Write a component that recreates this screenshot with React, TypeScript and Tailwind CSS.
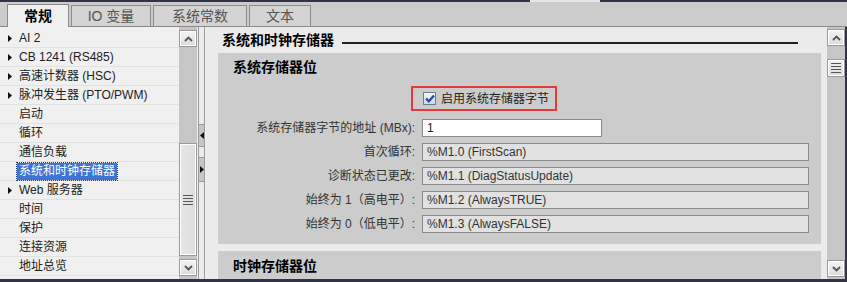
import React from 'react';

const font = "font-['Liberation_Sans','Noto_Sans_CJK_SC',sans-serif]";

const navItems: { label: string; arrow?: boolean; selected?: boolean }[] = [
  { label: 'AI 2', arrow: true },
  { label: 'CB 1241 (RS485)', arrow: true },
  { label: '高速计数器 (HSC)', arrow: true },
  { label: '脉冲发生器 (PTO/PWM)', arrow: true },
  { label: '启动' },
  { label: '循环' },
  { label: '通信负载' },
  { label: '系统和时钟存储器', selected: true },
  { label: 'Web 服务器', arrow: true },
  { label: '时间' },
  { label: '保护' },
  { label: '连接资源' },
  { label: '地址总览' },
];

const fields = [
  { label: '首次循环:', value: '%M1.0 (FirstScan)' },
  { label: '诊断状态已更改:', value: '%M1.1 (DiagStatusUpdate)' },
  { label: '始终为 1（高电平）:', value: '%M1.2 (AlwaysTRUE)' },
  { label: '始终为 0（低电平）:', value: '%M1.3 (AlwaysFALSE)' },
];

function Chevron({ up }: { up?: boolean }) {
  return (
    <svg width="9" height="6" viewBox="0 0 9 6">
      <path
        d={up ? 'M1 5 L4.5 1.5 L8 5' : 'M1 1 L4.5 4.5 L8 1'}
        stroke="#555"
        strokeWidth="1.8"
        fill="none"
      />
    </svg>
  );
}

function Grip() {
  return (
    <div className="flex flex-col gap-[2px]">
      <div className="w-[10px] h-px bg-[#555]" />
      <div className="w-[10px] h-px bg-[#555]" />
      <div className="w-[10px] h-px bg-[#555]" />
      <div className="w-[10px] h-px bg-[#555]" />
    </div>
  );
}

function ScrollButton({ up }: { up?: boolean }) {
  return (
    <div className="h-[17px] flex items-center justify-center bg-gradient-to-b from-[#f4f4f4] to-[#dcdcdc] border border-[#9a9a9a] shadow-[inset_0_0_0_1px_#fff]">
      <Chevron up={up} />
    </div>
  );
}

function Triangle({ dir }: { dir: 'left' | 'right' }) {
  return (
    <svg width="4" height="7" viewBox="0 0 4 7">
      <path d={dir === 'right' ? 'M0 0 L4 3.5 L0 7 Z' : 'M4 0 L0 3.5 L4 7 Z'} fill="#111" />
    </svg>
  );
}

export default function App() {
  return (
    <div className={`w-[847px] h-[282px] flex flex-col bg-[#cccccc] text-[12px] text-[#222] overflow-hidden ${font}`}>
      {/* top strip */}
      <div className="h-[2px] flex shrink-0">
        <div className="w-[530px] bg-[#2f3447]" />
        <div className="w-[70px] bg-[#e6e6e6]" />
        <div className="flex-1 bg-[#2f3447]" />
      </div>

      {/* tabs */}
      <div className="h-[25px] shrink-0 flex items-end pl-[7px] gap-[2px] border-b border-[#8a8a8a] bg-[#cccccc]">
        <div className="w-[62px] h-[23px] -mb-px bg-[#f0f0f0] border border-b-0 border-[#8a8a8a] flex items-center justify-center text-[14px] font-bold text-black">
          常规
        </div>
        <div className="w-[80px] h-[21px] bg-[#d4d4d4] border border-b-0 border-[#8a8a8a] flex items-center justify-center text-[14px] text-[#555]">
          IO 变量
        </div>
        <div className="w-[94px] h-[21px] bg-[#d4d4d4] border border-b-0 border-[#8a8a8a] flex items-center justify-center text-[14px] text-[#555]">
          系统常数
        </div>
        <div className="w-[62px] h-[21px] bg-[#d4d4d4] border border-b-0 border-[#8a8a8a] flex items-center justify-center text-[14px] text-[#555]">
          文本
        </div>
      </div>

      {/* main */}
      <div className="flex-1 flex min-h-0">
        {/* nav list */}
        <div className="w-[179px] bg-[#f0f0f0] pt-[2px] flex flex-col">
          {navItems.map((item) => (
            <div key={item.label} className="h-[19px] shrink-0 flex items-center border-b border-[#e2e2e2]">
              <div className="w-[17px] flex justify-center pl-[2px]">
                {item.arrow && <Triangle dir="right" />}
              </div>
              {item.selected ? (
                <span className="px-[2px] h-[17px] flex items-center bg-[#3d74d6] text-white outline outline-1 outline-dotted outline-[#1d3a80]">
                  {item.label}
                </span>
              ) : (
                <span className="px-[2px]">{item.label}</span>
              )}
            </div>
          ))}
        </div>

        {/* nav scrollbar */}
        <div className="w-[18px] flex flex-col bg-[#c6c6c6] pt-[3px] pb-[3px]">
          <ScrollButton up />
          <div className="h-[95px]" />
          <div className="flex-1 mt-px mb-[3px] bg-gradient-to-r from-[#e6e6e6] to-[#dedede] border border-[#9a9a9a] shadow-[inset_0_0_0_1px_#fff] flex items-center justify-center">
            <Grip />
          </div>
          <ScrollButton />
        </div>

        {/* splitter */}
        <div className="w-[9px] bg-[#f0f0f0] flex pl-px">
          <div className="w-[7px] border-x border-[#9a9a9a] bg-[#ececec] flex flex-col pt-[97px]">
            <div className="h-[23px] bg-[#c6c6c6] border-y border-[#9a9a9a] flex items-center justify-center">
              <Triangle dir="left" />
            </div>
            <div className="h-[10px]" />
            <div className="h-[25px] bg-[#c6c6c6] border-y border-[#9a9a9a] flex items-center justify-center">
              <Triangle dir="right" />
            </div>
          </div>
        </div>

        {/* content */}
        <div className="w-[621px] bg-[#ebebeb] flex flex-col pl-[12px] pr-[6px] overflow-hidden">
          <div className="h-[26px] shrink-0 flex items-center pl-[4px] gap-[8px]">
            <span className="text-[14px] font-bold text-black">系统和时钟存储器</span>
            <div className="flex-1 h-[1.5px] bg-[#222] mt-[6px] mr-[23px]" />
          </div>

          <div className="h-[191px] shrink-0 bg-[#cccccc] flex flex-col">
            <div className="h-[28px] flex items-center pl-[15px] text-[14px] font-bold text-black">系统存储器位</div>

            <div className="h-[35px] flex items-center pl-[193px]">
              <div className="h-[25px] pl-[10px] pr-[6px] flex items-center gap-[5px] border-2 border-[#e8383b]">
                <div className="w-[13px] h-[13px] border border-[#6f7c8f] bg-gradient-to-b from-[#f3f6fa] to-[#cdd7e4] flex items-center justify-center">
                  <svg width="10" height="9" viewBox="0 0 10 9">
                    <path d="M1 4.5 L3.8 7.3 L9 1.5" stroke="#1f4f9c" strokeWidth="2.2" fill="none" />
                  </svg>
                </div>
                <span className="text-[12px] text-[#222]">启用系统存储器字节</span>
              </div>
            </div>

            <div className="flex items-center h-[24px]">
              <div className="w-[204px] text-right pr-[7px] text-[#333]">系统存储器字节的地址 (MBx):</div>
              <div className="w-[180px] h-[18px] bg-white border border-[#8a8a8a] flex items-center pl-[4px] text-[#222]">1</div>
            </div>

            {fields.map((f) => (
              <div key={f.label} className="flex items-center h-[24px]">
                <div className="w-[204px] text-right pr-[7px] text-[#333]">{f.label}</div>
                <div className="w-[387px] h-[18px] bg-[#e1e1e1] border border-[#8a8a8a] flex items-center pl-[4px] text-[#333]">
                  {f.value}
                </div>
              </div>
            ))}
          </div>

          <div className="h-[7px] shrink-0" />

          <div className="flex-1 bg-[#cccccc] flex pl-[15px] pt-[5px]">
            <span className="text-[14px] font-bold text-black">时钟存储器位</span>
          </div>
        </div>

        {/* content scrollbar */}
        <div className="w-[18px] flex flex-col bg-[#c6c6c6] pt-[2px] pb-[2px]">
          <ScrollButton up />
          <div className="h-[13px]" />
          <div className="h-[18px] bg-gradient-to-b from-[#f0f0f0] to-[#dcdcdc] border border-[#9a9a9a] shadow-[inset_0_0_0_1px_#fff] flex items-center justify-center">
            <Grip />
          </div>
          <div className="flex-1" />
          <ScrollButton />
        </div>
        <div className="w-[2px] bg-[#2f3447]" />
      </div>

      <div className="h-[3px] shrink-0 bg-[#2f3447]" />
    </div>
  );
}
